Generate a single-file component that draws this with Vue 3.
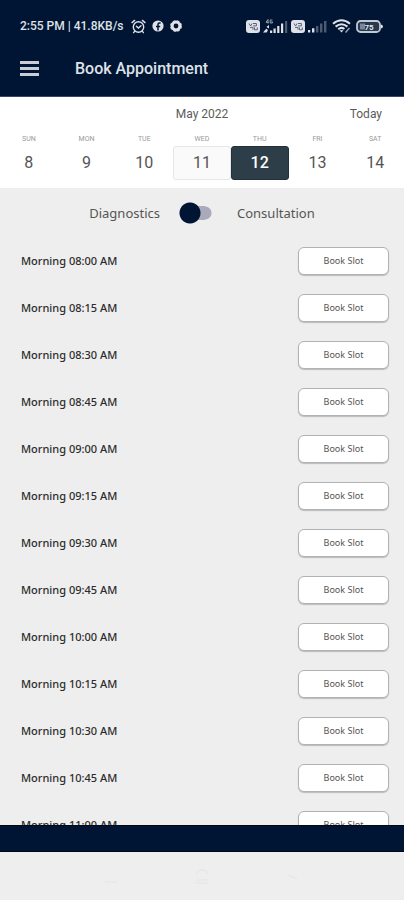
<script setup>
import { ref } from 'vue'

const days = [
  { name: 'SUN', date: 8 },
  { name: 'MON', date: 9 },
  { name: 'TUE', date: 10 },
  { name: 'WED', date: 11 },
  { name: 'THU', date: 12 },
  { name: 'FRI', date: 13 },
  { name: 'SAT', date: 14 },
]
const current = 11
const selected = ref(12)
const consultation = ref(false)
const slots = [
  '08:00', '08:15', '08:30', '08:45',
  '09:00', '09:15', '09:30', '09:45',
  '10:00', '10:15', '10:30', '10:45', '11:00',
]
</script>

<template>
  <div class="screen">
    <header class="top">
      <div class="status">
        <span class="clock">2:55 PM | 41.8KB/s</span>
        <svg class="i-alarm" viewBox="0 0 15 15" fill="none" stroke="currentColor" stroke-width="1.4" stroke-linecap="round">
          <circle cx="7.5" cy="8" r="5.2" />
          <path d="M1 3.6 3.6 1.4M14 3.6 11.4 1.4M5.4 7.2 7.4 9 10 6.8M3.6 12.4l-1 1.2M11.4 12.4l1 1.2" />
        </svg>
        <svg class="i-dot" viewBox="0 0 12 12">
          <circle cx="6" cy="6" r="5.6" fill="currentColor" />
          <path d="M8.6 3H7.4Q6 3 6 4.6V10.4M4 6.4H8.2" fill="none" stroke="#001533" stroke-width="1.5" />
        </svg>
        <svg class="i-dot" viewBox="0 0 12 12">
          <circle cx="6" cy="6" r="3.9" fill="none" stroke="currentColor" stroke-width="3" />
          <circle cx="6" cy="6" r="5.3" fill="none" stroke="currentColor" stroke-width="1.2" stroke-dasharray="2.6 1.6" />
        </svg>
        <span class="grow"></span>
        <svg class="i-sim" viewBox="0 0 14 13">
          <rect width="14" height="13" rx="3" fill="currentColor" />
          <path d="M3 3.5 4.6 6 6 3.5M7 3.5h3.4v2.4H7M4 7.4h3v2.4M8.5 7.4v2.4h2.8V7.4" fill="none" stroke="#56647a" stroke-width="1" />
        </svg>
        <svg class="i-signal" viewBox="0 0 25 15" fill="currentColor">
          <path d="M5 .5 3 3.3h2.8M5 .5v4M9.4 1H7.2v3h2.2V2.8H8.3" fill="none" stroke="#a4adbb" stroke-width=".9" />
          <path d="M3.400 8 6 6v3.400zM0 13.600l3.200-3.800L5 11l-1.400 2.600zM7 11.500h2.200V14H7zM10.500 9.500h2.200V14h-2.200zM14.200 7h2.200v7h-2.200zM18 4.500h2.200V14H18z" />
          <path d="M22 2h2.200v12H22z" fill="#4d5b72" />
        </svg>
        <svg class="i-sim" viewBox="0 0 14 13">
          <rect width="14" height="13" rx="3" fill="currentColor" />
          <path d="M3 3.5 4.6 6 6 3.5M7 3.5h3.4v2.4H7M4 7.4h3v2.4M8.5 7.4v2.4h2.8V7.4" fill="none" stroke="#56647a" stroke-width="1" />
        </svg>
        <svg class="i-bars" viewBox="0 0 19 14" fill="currentColor">
          <path d="M0 11h2.200v2.500H0zM4 9.200h2.400v4.300H4z" />
          <path d="M8 7h2.400v6.500H8zM12 4.500h2.400v9H12zM16 2h2.400v11.500H16z" fill="#4d5b72" />
        </svg>
        <svg class="i-wifi" viewBox="0 0 19 14" fill="none" stroke="currentColor" stroke-width="2">
          <path d="M1 4.8Q9.5-2.200 18 4.8M3.6 7.6Q9.5 2.8 15.4 7.6M6.2 10.2Q9.5 7.6 12.4 10" />
          <path d="M7.5 11.2h4L9.5 13.6z" fill="currentColor" stroke="none" />
          <path d="M13.5 13.500 17.500 9" stroke="#8f9aab" stroke-width="1.600" />
        </svg>
        <svg class="i-battery" viewBox="0 0 27 13">
          <rect x="1" y="1" width="23" height="11" rx="3.5" fill="#26374f" stroke="#c3c9d3" stroke-width="1.8" />
          <path d="M4 3.5h5v6H4z" fill="#7b8799" />
          <path d="M25 4.500q2 .4 2 2t-2 2z" fill="currentColor" />
          <text x="13" y="9.500" text-anchor="middle" class="charge">75</text>
        </svg>
      </div>
      <div class="bar">
        <button class="menu" type="button" aria-label="Menu"><span></span><span></span><span></span></button>
        <h1>Book Appointment</h1>
      </div>
    </header>

    <section class="calendar">
      <div class="month">
        <span></span>
        <span>May 2022</span>
        <button class="today" type="button" @click="selected = current">Today</button>
      </div>
      <div class="week">
        <button
          v-for="d in days"
          :key="d.date"
          type="button"
          class="day"
          :class="{ current: d.date === current, selected: d.date === selected }"
          @click="selected = d.date"
        >
          <span class="name">{{ d.name }}</span>
          <span class="date">{{ d.date }}</span>
        </button>
      </div>
    </section>

    <label class="mode">
      <span class="left">Diagnostics</span>
      <input v-model="consultation" type="checkbox" role="switch" />
      <span class="right">Consultation</span>
    </label>

    <main class="slots">
      <ul>
        <li v-for="s in slots" :key="s">
          <span>Morning {{ s }} AM</span>
          <button type="button">Book Slot</button>
        </li>
      </ul>
    </main>

    <div class="strip"></div>
    <nav class="system">
      <svg viewBox="0 0 16 16"><path d="M2 14h12" /></svg>
      <svg viewBox="0 0 16 16"><path d="M3 6q0-4 5-4t5 4M2 12h12M2 15h12" /></svg>
      <svg viewBox="0 0 16 16"><path d="M3 7l9 4" /></svg>
    </nav>
  </div>
</template>

<style>
body {
  background: #eee;
}
</style>

<style scoped>
.screen {
  height: 100vh;
  display: flex;
  flex-direction: column;
  background: #eee;
  color: #444;
  font-family: Roboto, "Liberation Sans", sans-serif;
}
button {
  font: inherit;
  color: inherit;
  border: 0;
  padding: 0;
  background: none;
  cursor: pointer;
}
.top {
  background: #001533;
  color: #dfe2e8;
  padding-top: 12px;
  border-bottom: 1px solid #3c4668;
}
.status {
  display: flex;
  align-items: center;
  height: 28px;
  padding: 0 21px 0 20px;
}
.status svg {
  flex: none;
}
.clock {
  font-size: 12px;
  font-weight: 500;
  white-space: nowrap;
}
.grow {
  flex: 1;
}
.i-alarm {
  width: 15px;
  height: 15px;
  margin-left: 7px;
}
.i-dot {
  width: 12px;
  height: 12px;
  margin-left: 6px;
}
.i-sim {
  width: 14px;
  height: 13px;
}
.i-signal {
  width: 25px;
  height: 15px;
  margin: 0 3px;
}
.i-bars {
  width: 19px;
  height: 14px;
  margin-left: 3px;
}
.i-wifi {
  width: 19px;
  height: 14px;
  margin: 0 5px;
}
.i-battery {
  width: 27px;
  height: 13px;
}
.charge {
  font-size: 8px;
  font-weight: 700;
  fill: #e4e7ec;
}
.bar {
  display: flex;
  align-items: center;
  height: 56px;
  padding: 0 20px;
  gap: 36px;
}
.menu {
  display: grid;
  gap: 3px;
  width: 19px;
}
.menu span {
  height: 3px;
  background: #c9ccd2;
}
h1 {
  margin: 0;
  font-size: 16px;
  font-weight: 500;
}
.calendar {
  background: #fff;
  padding: 7px 0 8px;
}
.month {
  display: grid;
  grid-template-columns: 1fr auto 1fr;
  height: 20px;
  line-height: 20px;
  padding: 0 22px;
  font-size: 12px;
  color: #5c5c5c;
}
.today {
  justify-self: end;
}
.week {
  display: grid;
  grid-template-columns: repeat(7, 1fr);
  padding-top: 9px;
}
.day {
  display: grid;
}
.name {
  font-size: 7px;
  line-height: 12px;
  color: #999;
}
.date {
  margin-top: 1px;
  font-size: 16px;
  line-height: 32px;
  color: #555;
  border: 1px solid transparent;
  border-radius: 3px;
}
.current .date {
  background: #fafafa;
  border-color: #e6e6e6;
}
.selected .date {
  background: #2d3e48;
  border-color: #22313a;
  color: #fff;
  font-weight: 500;
}
.mode {
  display: grid;
  grid-template-columns: 1fr 34px 1fr;
  align-items: center;
  column-gap: 19px;
  height: 49px;
  padding-right: 12px;
  font-family: "Noto Sans", sans-serif;
  font-size: 13px;
  color: #555;
}
.left {
  text-align: right;
}
.right {
  padding-left: 5px;
}
.mode input {
  appearance: none;
  margin: 0;
  width: 34px;
  height: 22px;
  background:
    radial-gradient(circle at 11px 11px, #001533 10px, transparent 11px),
    linear-gradient(#a9abba, #a9abba) 11px 4px / 15px 14px no-repeat,
    radial-gradient(circle at 26px 11px, #a9abba 6px, transparent 7px);
}
.mode input:checked {
  background:
    radial-gradient(circle at 23px 11px, #001533 10px, transparent 11px),
    linear-gradient(#a9abba, #a9abba) 8px 4px / 15px 14px no-repeat,
    radial-gradient(circle at 8px 11px, #a9abba 6px, transparent 7px);
}
.slots {
  flex: 1;
  min-height: 0;
  overflow-y: auto;
  scrollbar-width: none;
}
ul {
  list-style: none;
  margin: 0;
  padding: 0;
}
li {
  display: flex;
  align-items: center;
  justify-content: space-between;
  height: 47px;
  padding: 0 15px 0 21px;
  font-family: "Noto Sans", sans-serif;
  font-size: 11px;
  font-weight: 500;
  color: #2c2c2c;
}
li button {
  width: 91px;
  height: 28px;
  border: 1px solid #b0b3b5;
  border-radius: 6px;
  background: #fff;
  box-shadow: 0 1px 1px #bbb;
  font-size: 9px;
  font-weight: 400;
  color: #555;
}
.strip {
  height: 25px;
  background: #001533;
  border: solid #000814;
  border-width: 1px 0;
}
.system {
  display: flex;
  justify-content: center;
  align-items: center;
  gap: 75px;
  height: 48px;
}
.system svg {
  width: 16px;
  height: 16px;
  fill: none;
  stroke: #e4e4e4;
}
</style>
